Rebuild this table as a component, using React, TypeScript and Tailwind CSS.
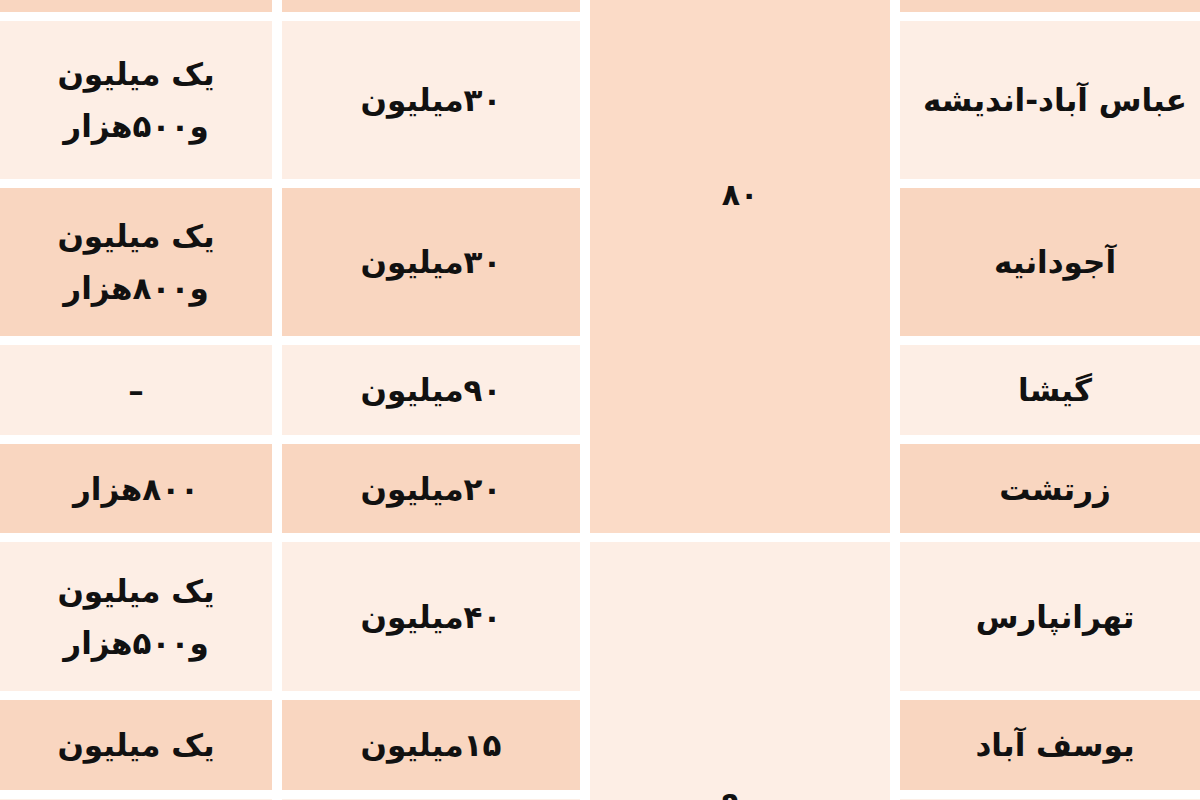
import * as React from "react";

type Shade = "dark" | "light";

const cellBg: Record<Shade, string> = {
  dark: "bg-[#f9d6c0]",
  light: "bg-[#fdeee5]",
};

interface Row {
  shade: Shade;
  area: string;
  rent: string[];
  deposit: string[];
}

// Rows in top-to-bottom order; row 0 and the last row are cut by the frame
const ROWS: Row[] = [
  { shade: "dark", area: "", rent: [""], deposit: [""] },
  {
    shade: "light",
    area: "عباس آباد-اندیشه",
    rent: ["۳۰میلیون"],
    deposit: ["یک میلیون", "و۵۰۰هزار"],
  },
  {
    shade: "dark",
    area: "آجودانیه",
    rent: ["۳۰میلیون"],
    deposit: ["یک میلیون", "و۸۰۰هزار"],
  },
  { shade: "light", area: "گیشا", rent: ["۹۰میلیون"], deposit: ["–"] },
  { shade: "dark", area: "زرتشت", rent: ["۲۰میلیون"], deposit: ["۸۰۰هزار"] },
  {
    shade: "light",
    area: "تهرانپارس",
    rent: ["۴۰میلیون"],
    deposit: ["یک میلیون", "و۵۰۰هزار"],
  },
  { shade: "dark", area: "یوسف آباد", rent: ["۱۵میلیون"], deposit: ["یک میلیون"] },
  { shade: "light", area: "", rent: [""], deposit: [""] },
];

const Cell: React.FC<{ shade: Shade; lines: string[]; row: number; col: number }> = ({
  shade,
  lines,
  row,
  col,
}) => (
  <div
    dir="rtl"
    className={`${cellBg[shade]} flex flex-col items-center justify-center text-center text-[31px] leading-[52px] font-bold text-[#111]`}
    style={{ gridRow: row + 1, gridColumn: col }}
  >
    {lines.map((l, i) => (
      <span key={i} className="whitespace-nowrap">
        {l}
      </span>
    ))}
  </div>
);

export default function App() {
  return (
    <div
      className="w-[1200px] h-[800px] overflow-hidden bg-white"
      style={{ fontFamily: '"DejaVu Sans", sans-serif' }}
    >
      <div className="grid grid-cols-[272px_298px_300px_310px] grid-rows-[90px_158px_148px_90px_89px_149px_90px_90px] gap-x-[10px] gap-y-[9px] -mt-[78px] w-[1210px]">
        {ROWS.map((r, i) => (
          <React.Fragment key={i}>
            <Cell shade={r.shade} lines={r.deposit} row={i} col={1} />
            <Cell shade={r.shade} lines={r.rent} row={i} col={2} />
            <Cell shade={r.shade} lines={[r.area]} row={i} col={4} />
          </React.Fragment>
        ))}

        {/* merged price-per-metre cells */}
        <div
          dir="rtl"
          className="bg-[#fbdbc7] row-start-1 row-end-6 col-start-3 flex items-center justify-center pb-[66px] text-[30px] font-bold text-[#111]"
        >
          ۸۰
        </div>
        <div
          dir="rtl"
          className="bg-[#fdeee5] row-start-6 row-end-9 col-start-3 flex justify-center pt-[238px] text-[30px] font-bold text-[#111]"
        >
          ۹۰
        </div>
      </div>
    </div>
  );
}
